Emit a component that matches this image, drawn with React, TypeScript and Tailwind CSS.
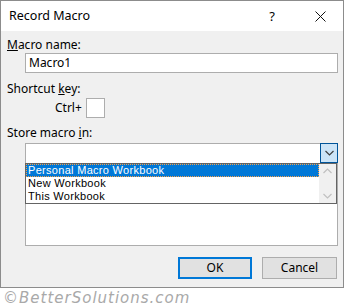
const font = "font-['Segoe_UI','Noto_Sans',sans-serif]";

const Chevron = ({ up = false, color = "#404040" }: { up?: boolean; color?: string }) => (
  <svg width="9" height="6" viewBox="0 0 9 6">
    <path
      d={up ? "M0.5 5 L4.5 1 L8.5 5" : "M0.5 1 L4.5 5 L8.5 1"}
      fill="none"
      stroke={color}
      strokeWidth="1.2"
    />
  </svg>
);

const App = () => {
  return (
    <div className={`w-[344px] h-[308px] bg-white text-[12px] text-black ${font}`}>
      <div className="w-[344px] h-[288px] border border-[#8c8c8c] flex flex-col">
        {/* title bar */}
        <div className="h-[30px] bg-white flex items-center pl-2 shrink-0">
          <span className="text-[12.5px] leading-none">Record Macro</span>
          <span className="ml-auto text-[13px] leading-none mr-[40px]">?</span>
          <svg width="11" height="11" viewBox="0 0 11 11" className="mr-[17px]">
            <path d="M0.5 0.5 L10.5 10.5 M10.5 0.5 L0.5 10.5" stroke="#111" strokeWidth="1" />
          </svg>
        </div>

        <div className="flex-1 bg-[#f0f0f0] pl-[6px] pr-[6px] pt-[6px] flex flex-col">
          <div className="h-[16px] leading-[16px]">
            <u>M</u>acro name:
          </div>
          <div className="ml-[18px] w-[313px] h-[20px] border border-[#adadad] bg-white pl-[3px] leading-[18px]">
            Macro1
          </div>

          <div className="h-[16px] leading-[16px] mt-[8px]">
            Shortcut <u>k</u>ey:
          </div>
          <div className="flex items-center h-[20px] mt-[1px]">
            <span className="ml-[48px] w-[31px]">Ctrl+</span>
            <div className="w-[19px] h-[20px] border border-[#adadad] bg-white" />
          </div>

          <div className="h-[16px] leading-[16px] mt-[7px]">
            Store macro <u>i</u>n:
          </div>
          <div className="relative ml-[18px] mt-[2px] w-[313px] h-[103px] border border-[#adadad] bg-white">
            <div className="flex justify-end h-[19px] -mt-px -mr-px">
              <div className="w-[18px] h-[20px] bg-[#cce4f7] border border-[#005499] flex items-center justify-center">
                <Chevron />
              </div>
            </div>
            {/* dropped-down list */}
            <div className="absolute left-[-1px] top-[19px] w-[312px] h-[41px] border border-[#646464] bg-white flex text-[11px] tracking-[0.3px] font-['Liberation_Sans',sans-serif]">
              <div className="flex-1 flex flex-col">
                <div className="h-[13px] leading-[13px] overflow-hidden bg-[#0078d7] text-white pl-[2px] outline outline-1 outline-dotted outline-[#f5a04a] -outline-offset-1">
                  Personal Macro Workbook
                </div>
                <div className="h-[13px] leading-[13px] overflow-hidden pl-[2px]">New Workbook</div>
                <div className="h-[13px] leading-[13px] overflow-hidden pl-[2px]">This Workbook</div>
              </div>
              <div className="w-[17px] bg-[#f0f0f0] flex flex-col items-center justify-between py-[4px]">
                <Chevron up color="#c0c0c0" />
                <Chevron color="#c0c0c0" />
              </div>
            </div>
          </div>

          <div className="flex justify-end gap-[10px] mt-[11px]">
            <button className="w-[74px] h-[22px] bg-[#e1e1e1] border-2 border-[#0078d7] leading-none">
              OK
            </button>
            <button className="w-[75px] h-[22px] bg-[#e1e1e1] border border-[#adadad] leading-none">
              Cancel
            </button>
          </div>
        </div>
      </div>
      <div className="pl-[3px] pt-[1px] text-[15px] leading-[18px] italic tracking-[1px] text-[#a9a9a9] font-['DejaVu_Sans',sans-serif]">
        ©BetterSolutions.com
      </div>
    </div>
  );
};

export default App;
